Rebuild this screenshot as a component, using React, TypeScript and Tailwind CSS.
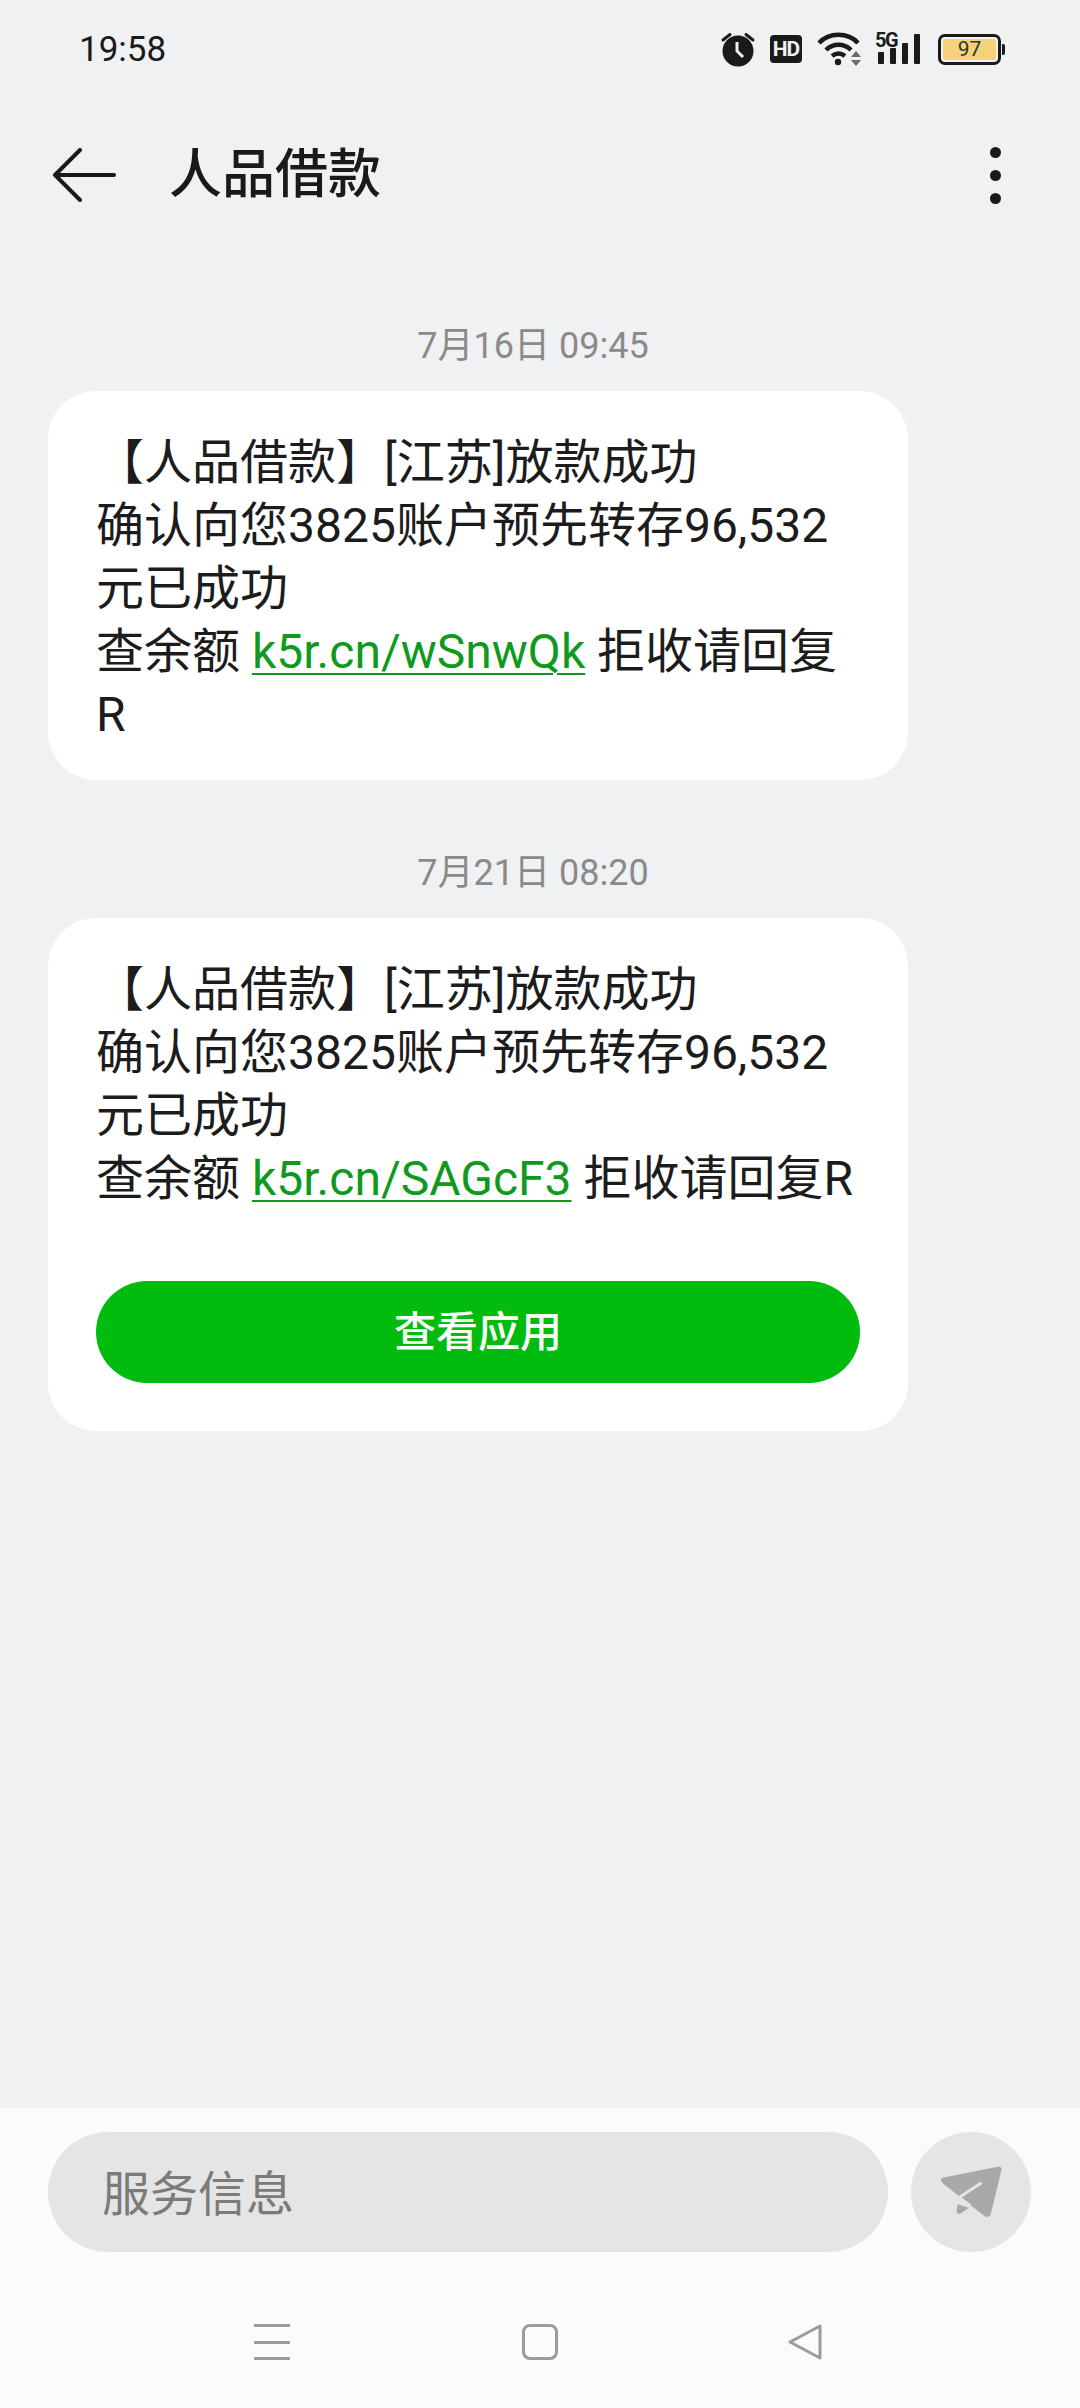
const sans = "font-['Roboto','Noto_Sans_CJK_SC',sans-serif]"

function StatusIcons() {
  return (
    <div className="flex items-center text-[#1a1a1a]">
      <svg width="36" height="36" viewBox="0 0 36 36" className="mr-[14px]">
        <circle cx="18" cy="20" r="15.5" fill="#1a1a1a" />
        <path d="M3 9 L10 3.5 M33 9 L26 3.5" stroke="#1a1a1a" strokeWidth="3" strokeLinecap="round" />
        <path d="M17 11 V20 L23 26" stroke="#f0f1f3" strokeWidth="3" fill="none" />
      </svg>
      <div className="mr-[15px] flex h-[28px] w-[32px] items-center justify-center rounded-[4px] bg-[#1a1a1a] font-['Roboto',sans-serif] text-[21px] leading-none font-bold tracking-[-1px] text-[#f0f1f3]">
        HD
      </div>
      <svg width="46" height="36" viewBox="0 0 46 36" className="mr-[12px]">
        <path d="M2 12 C12 1 31 1 41 12" stroke="#1a1a1a" strokeWidth="4.5" fill="none" />
        <path d="M9 19 C16 12 27 12 34 19" stroke="#1a1a1a" strokeWidth="4.5" fill="none" />
        <path d="M15 25 C19 22 24 22 28 25" stroke="#1a1a1a" strokeWidth="4.5" fill="none" />
        <circle cx="21" cy="31" r="3.2" fill="#1a1a1a" />
        <path d="M34 26 L39 20 L44 26 Z M34 29 L44 29 L39 35 Z" fill="#6b6b6b" />
      </svg>
      <div className="relative mr-[15px] flex h-[36px] w-[48px] items-end gap-[6px] pb-[3px] pl-[3px]">
        <div className="h-[12px] w-[6px] rounded-[1px] bg-[#1a1a1a]" />
        <div className="h-[16px] w-[6px] rounded-[1px] bg-[#1a1a1a]" />
        <div className="h-[21px] w-[6px] rounded-[1px] bg-[#1a1a1a]" />
        <div className="h-[30px] w-[6px] rounded-[1px] bg-[#1a1a1a]" />
        <span className="absolute top-[-1px] left-0 font-['Roboto',sans-serif] text-[20px] leading-none font-bold tracking-[-1.5px]">5G</span>
      </div>
      <div className="flex items-center">
        <div className="flex h-[31px] w-[63px] items-center rounded-[7px] border-[3px] border-[#1a1a1a] p-[2px]">
          <div className="flex h-full w-full items-center justify-center rounded-[3px] bg-[#f5d179] font-['Roboto',sans-serif] text-[21px] leading-none text-[#333]">
            97
          </div>
        </div>
        <div className="ml-[1px] h-[11px] w-[3px] rounded-r-[2px] bg-[#1a1a1a]" />
      </div>
    </div>
  )
}

function Link({ children }: { children: string }) {
  return <span className="text-[#0f9a1e] underline decoration-[2px] underline-offset-[5px]">{children}</span>
}

function Bubble({ children, pad }: { children: React.ReactNode; pad: string }) {
  return (
    <div className={`w-[860px] rounded-[48px] bg-white px-[48px] pt-[40px] text-[48px] leading-[63px] whitespace-nowrap text-[#1c1c1c] ${pad}`}>
      {children}
    </div>
  )
}

function DateLabel({ children }: { children: string }) {
  return <div className="w-[1066px] text-center text-[36px] leading-[50px] text-[#8a8a8a]">{children}</div>
}

export default function App() {
  return (
    <div className={`flex h-[2408px] w-[1080px] flex-col bg-[#f0f1f3] ${sans}`}>
      <div className="flex h-[96px] items-center justify-between pt-[2px] pr-[75px] pl-[79px]">
        <span className="text-[35px] leading-none text-[#1a1a1a]">19:58</span>
        <StatusIcons />
      </div>

      <div className="mt-[40px] flex h-[78px] items-center pr-[79px] pl-[52px]">
        <svg width="64" height="54" viewBox="0 0 64 54" fill="none" stroke="#1a1a1a" strokeWidth="4" strokeLinecap="round" strokeLinejoin="round">
          <path d="M28 2 L3 27 L28 52 M3 27 H62" />
        </svg>
        <span className="ml-[53px] flex-1 text-[53px] leading-none font-medium text-[#1a1a1a]">人品借款</span>
        <div className="flex flex-col gap-[12px]">
          <div className="size-[11px] rounded-full bg-[#1a1a1a]" />
          <div className="size-[11px] rounded-full bg-[#1a1a1a]" />
          <div className="size-[11px] rounded-full bg-[#1a1a1a]" />
        </div>
      </div>

      <div className="flex flex-1 flex-col pt-[107px] pl-[48px]">
        <div className="-ml-[48px] mb-[20px]">
          <DateLabel>7月16日 09:45</DateLabel>
        </div>
        <Bubble pad="pb-[34px]">
          <p>【人品借款】[江苏]放款成功</p>
          <p>确认向您3825账户预先转存96,532</p>
          <p>元已成功</p>
          <p>查余额 <Link>k5r.cn/wSnwQk</Link> 拒收请回复</p>
          <p>R</p>
        </Bubble>
        <div className="-ml-[48px] mt-[68px] mb-[20px]">
          <DateLabel>7月21日 08:20</DateLabel>
        </div>
        <Bubble pad="pb-[48px]">
          <p>【人品借款】[江苏]放款成功</p>
          <p>确认向您3825账户预先转存96,532</p>
          <p>元已成功</p>
          <p>查余额 <Link>k5r.cn/SAGcF3</Link> 拒收请回复R</p>
          <button className="mt-[71px] flex h-[102px] w-[764px] items-center justify-center rounded-full bg-[#02bb0f] text-[42px] font-medium text-white">
            查看应用
          </button>
        </Bubble>
      </div>

      <div className="flex h-[300px] flex-col bg-[#fbfbfb] pt-[24px]">
        <div className="flex items-center pr-[49px] pl-[48px]">
          <div className="flex h-[120px] w-[840px] items-center rounded-full bg-[#e5e5e5] pt-[5px] pl-[54px] text-[48px] text-[#7b7b7b]">
            服务信息
          </div>
          <div className="ml-auto flex size-[120px] items-center justify-center rounded-full bg-[#e5e5e5]">
            <svg width="62" height="52" viewBox="185 168 186 156">
              <path d="M192 203 L358 170 Q372 168 369 182 L338 310 Q333 326 318 318 L196 222 Q182 209 192 203 Z" fill="#a9a9a9" />
              <path d="M238 283 L272 293 L246 311 Q235 314 235 302 Z" fill="#a9a9a9" />
              <path d="M310 218 L243 262 L275 286" stroke="#e5e5e5" strokeWidth="9" fill="none" />
            </svg>
          </div>
        </div>
        <div className="mt-[72px] flex items-center pl-[254px]">
          <div className="flex h-[36px] w-[36px] flex-col justify-between">
            <div className="h-[3px] bg-[#9b9b9b]" />
            <div className="h-[3px] bg-[#9b9b9b]" />
            <div className="h-[3px] bg-[#9b9b9b]" />
          </div>
          <div className="ml-[232px] h-[36px] w-[36px] rounded-[8px] border-[3px] border-[#9b9b9b]" />
          <svg width="36" height="36" viewBox="0 0 36 36" fill="none" stroke="#9b9b9b" strokeWidth="3" strokeLinejoin="round" className="ml-[229px]">
            <path d="M33 2 L3 18 L33 34 Z" />
          </svg>
        </div>
      </div>
    </div>
  )
}
